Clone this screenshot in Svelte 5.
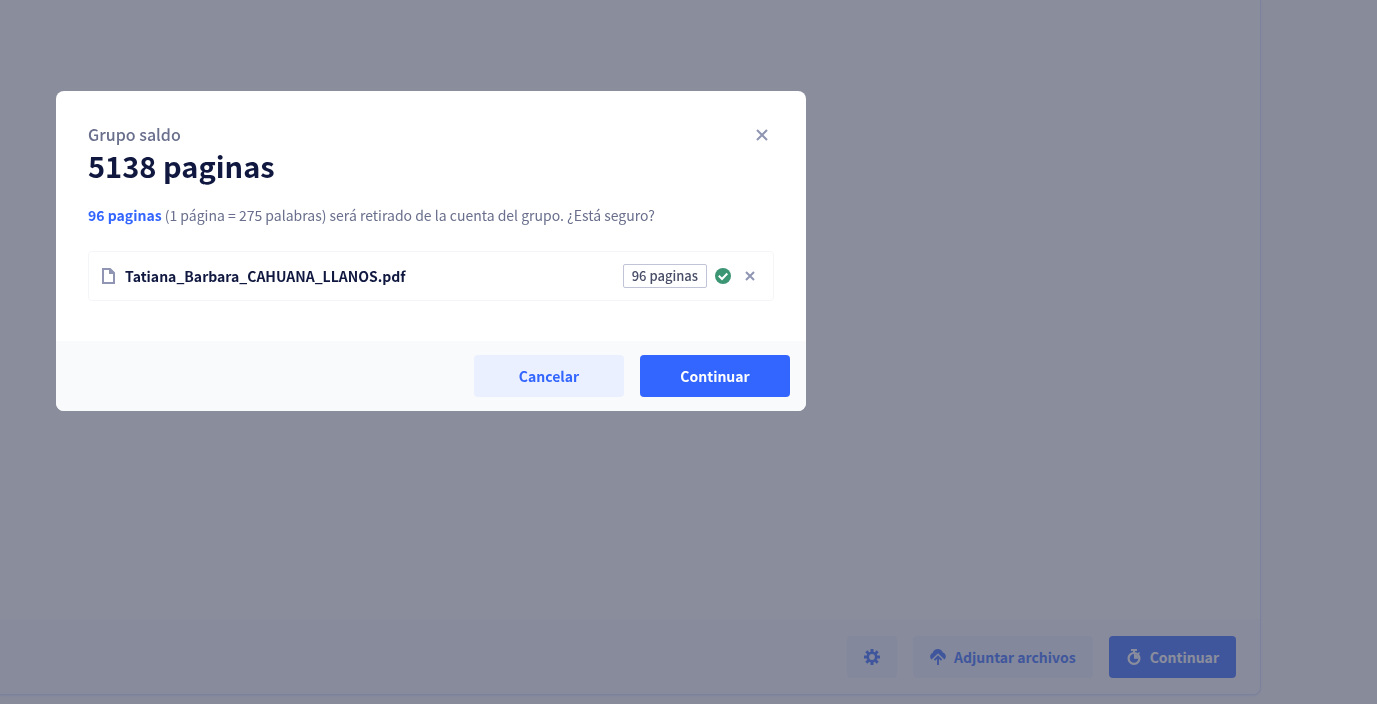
<script lang="ts">
  const files = $state([{ name: 'Tatiana_Barbara_CAHUANA_LLANOS.pdf', pages: 96 }]);
  const balance = 5138;
  let total = $derived(files.reduce((sum, file) => sum + file.pages, 0));
</script>

<div class="page">
  <main class="workspace">
    <footer class="toolbar">
      <button class="btn soft icon-only" aria-label="Ajustes">
        <svg width="16" height="16" viewBox="0 0 16 16">
          <circle cx="8" cy="8" r="4.200" fill="none" stroke="currentColor" stroke-width="2.600" />
          <path d="M8 0v3.500M8 12.500V16M0 8h3.500M12.500 8H16M2.300 2.300l2.400 2.400M11.300 11.300l2.400 2.400M2.300 13.700l2.400-2.400M11.300 4.700l2.400-2.400" fill="none" stroke="currentColor" stroke-width="3" />
        </svg>
      </button>
      <button class="btn soft">
        <svg width="16" height="16" viewBox="0 0 16 16" fill="currentColor">
          <path d="M1.600 10.500C-.6 8.600-.2 5 2.600 4 3.300 1.300 5.600 0 7.800 0c2.500 0 4.300 1.300 5 3.400 3.100.8 4.200 4.600 1.700 7.100L8.700 4.900a1 1 0 0 0-1.400 0z" />
          <path d="M8 16V8M4.400 11.200L8 7.600l3.600 3.600" fill="none" stroke="currentColor" stroke-width="1.900" />
        </svg>
        Adjuntar archivos
      </button>
      <button class="btn primary muted">
        <svg width="16" height="16" viewBox="0 0 16 16">
          <path d="M5 1h6M8 1v2.500M12.300 3.700l1 1" fill="none" stroke="currentColor" stroke-width="2" />
          <circle cx="8" cy="9.400" r="5.400" fill="none" stroke="currentColor" stroke-width="2.200" />
          <path d="M8 5v4.700h4.500A4.500 4.700 0 0 0 8 5z" fill="currentColor" />
        </svg>
        Continuar
      </button>
    </footer>
  </main>
</div>

<div class="overlay">
  <div class="dialog" role="dialog" aria-modal="true" aria-labelledby="dialog-title">
    <div class="content">
      <header>
        <div>
          <p class="label">Grupo saldo</p>
          <h1 id="dialog-title">{balance} paginas</h1>
        </div>
        <button class="close" aria-label="Cerrar">
          <svg width="12" height="12" viewBox="0 0 12 12"><path d="M1 1l10 10M11 1l-10 10" /></svg>
        </button>
      </header>
      <p class="message">
        <strong>{total} paginas</strong> (1 página = 275 palabras) será retirado de la cuenta del grupo. ¿Está seguro?
      </p>
      <ul>
        {#each files as file}
          <li>
            <svg class="doc" width="16" height="16" viewBox="0 0 16 16">
              <path d="M2 1h7L13 5v10H2z" fill="none" stroke="currentColor" stroke-width="2" />
              <path d="M8 1h2l3 3v2H8z" fill="currentColor" />
            </svg>
            <span class="name">{file.name}</span>
            <span class="badge">{file.pages} paginas</span>
            <svg width="16" height="16" viewBox="0 0 16 16">
              <circle cx="8" cy="8" r="8" fill="#3c9674" />
              <path d="M3.800 7.800l3.200 3.200 5.300-5.500" fill="none" stroke="#fff" stroke-width="2" />
            </svg>
            <button class="close small" aria-label="Quitar archivo">
              <svg width="10" height="10" viewBox="0 0 10 10"><path d="M1 1l8 8M9 1l-8 8" /></svg>
            </button>
          </li>
        {/each}
      </ul>
    </div>
    <div class="actions">
      <button class="btn soft wide">Cancelar</button>
      <button class="btn primary wide">Continuar</button>
    </div>
  </div>
</div>

<style>
  :global(body) {
    margin: 0;
    background: #f9fafb;
    font-family: 'Noto Sans CJK SC', 'Noto Sans', sans-serif;
    color: #101840;
  }

  .page {
    display: flex;
    box-sizing: border-box;
    min-height: 100vh;
    padding: 0 116px 9px 0;
  }

  .workspace {
    flex: 1;
    display: flex;
    flex-direction: column;
    justify-content: flex-end;
    background: #fff;
    border: solid #e3e8ff;
    border-width: 0 1px 1px 0;
    border-radius: 0 0 8px 0;
    box-shadow: 0 1px 2px #e8ecff;
  }

  .toolbar {
    display: flex;
    justify-content: flex-end;
    gap: 16px;
    padding: 16px 24px;
    background: #fafbfd;
    border-top: 1px solid #fafbfc;
    border-radius: 0 0 8px 0;
  }

  button {
    border: 0;
    cursor: pointer;
    font-family: inherit;
  }

  .btn {
    display: flex;
    align-items: center;
    justify-content: center;
    gap: 8px;
    height: 42px;
    padding: 0 17px;
    border-radius: 4px;
    font-size: 14px;
    font-weight: 700;
  }

  .soft {
    background: #eaf0ff;
    color: #3366ff;
  }

  .toolbar .soft {
    background: #f0f4ff;
    color: #6b91ff;
  }

  .primary {
    background: #3366ff;
    color: #fff;
  }

  .muted {
    background: #6b91ff;
  }

  .icon-only {
    width: 50px;
  }

  .wide {
    width: 150px;
  }

  .overlay {
    position: fixed;
    inset: 0;
    overflow: auto;
    padding: 91px 56px;
    background: rgba(21, 27, 57, 0.5);
  }

  .dialog {
    max-width: 750px;
    background: #fff;
    border-radius: 8px;
    overflow: hidden;
  }

  .content {
    padding: 32px 32px 40px;
  }

  header {
    display: flex;
    justify-content: space-between;
    align-items: flex-start;
  }

  p,
  h1,
  ul {
    margin: 0;
    padding: 0;
  }

  .label {
    font-size: 16px;
    font-weight: 500;
    line-height: 22px;
    color: #696f8c;
  }

  h1 {
    font-size: 29px;
    font-weight: 700;
    line-height: 40px;
  }

  .close {
    display: grid;
    place-items: center;
    width: 24px;
    height: 24px;
    padding: 0;
    background: none;
    color: #8f95b2;
  }

  .small {
    width: 22px;
  }

  .close path {
    fill: none;
    stroke: currentColor;
    stroke-width: 2;
  }

  .message {
    margin-top: 18px;
    font-size: 14px;
    line-height: 24px;
    color: #696f8c;
  }

  strong {
    font-weight: 700;
    color: #3366ff;
  }

  ul {
    margin-top: 24px;
    list-style: none;
  }

  li {
    display: flex;
    align-items: center;
    gap: 8px;
    padding: 12px;
    border: 1px solid #f4f5f8;
    border-radius: 4px;
  }

  .doc {
    color: #8f95b2;
  }

  .name {
    flex: 1;
    font-size: 14px;
    font-weight: 700;
    line-height: 24px;
  }

  .badge {
    padding: 0 8px;
    border: 1px solid #c1c4d6;
    border-radius: 2px;
    font-size: 13px;
    font-weight: 500;
    line-height: 22px;
    color: #474d66;
  }

  .actions {
    display: flex;
    justify-content: flex-end;
    gap: 16px;
    padding: 14px 16px;
    background: #f9fafc;
  }
</style>
